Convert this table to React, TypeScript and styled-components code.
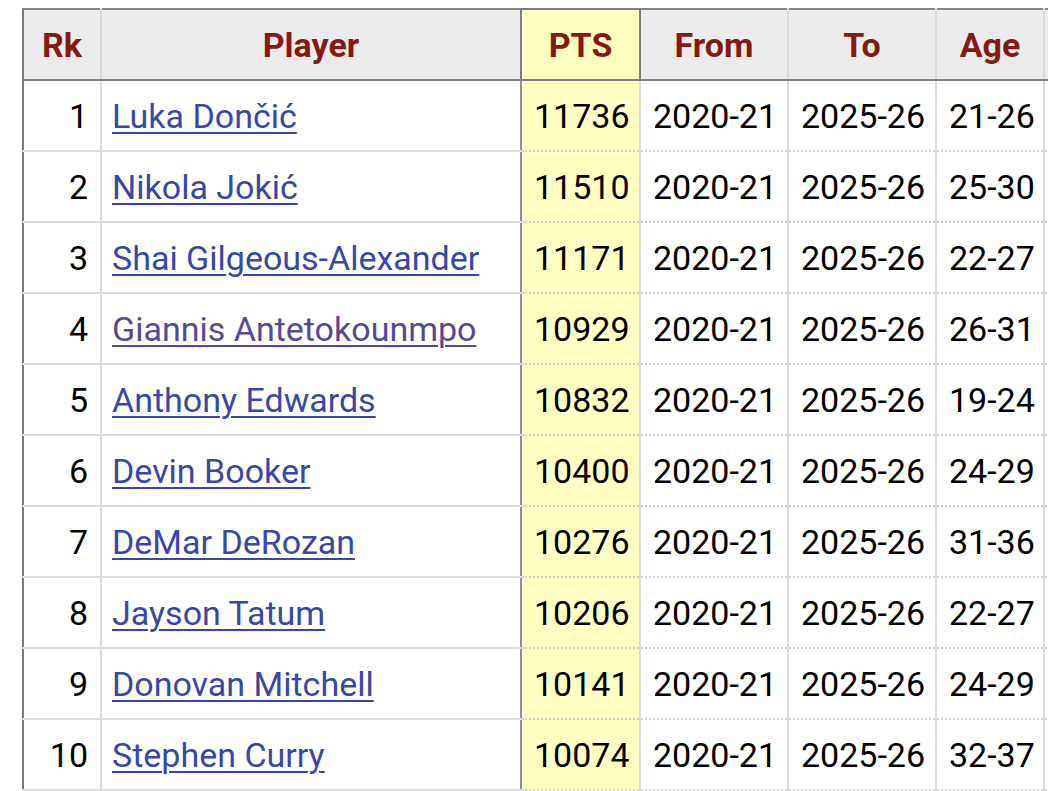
import React from "react";
import styled, { createGlobalStyle } from "styled-components";

const GlobalStyle = createGlobalStyle`
    html, body {
        margin: 0;
        padding: 0;
        background: #ffffff;
        overflow: hidden;
    }
    body {
        font-family: Roboto, "Liberation Sans", sans-serif;
    }
`
const Page = styled.div`
    width: 1048px;
    height: 791px;
    overflow: hidden;
    padding: 8px 0 0 22px;
    box-sizing: border-box;
`
const Table = styled.table`
    border-collapse: collapse;
    table-layout: fixed;
    width: 1120px;
    border-top: 2px solid #858585;
    border-left: 2px solid #7a7a7a;
`
const Th = styled.th<{ $hl?: boolean; $beforeHl?: boolean }>`
    height: 69px;
    padding: 0;
    background: ${p => (p.$hl ? "#ffffc2" : "#ececec")};
    color: #861a13;
    font-size: 34px;
    font-weight: 700;
    text-align: center;
    vertical-align: middle;
    border-bottom: 2px solid #7e7e7e;
    border-right: ${p => (p.$beforeHl ? "none" : "2px solid #d9d9d9")};
    ${p => p.$hl && "border: 2px solid #7e7e7e;"}
`
const Td = styled.td<{ $hl?: boolean; $left?: boolean; $dotted?: boolean; $beforeHl?: boolean }>`
    height: 69px;
    padding: ${p => (p.$left ? "0 10px" : "0 12px")};
    font-size: 34px;
    color: #000;
    text-align: ${p => (p.$left ? "left" : "right")};
    vertical-align: middle;
    white-space: nowrap;
    background: ${p => (p.$hl ? "#ffffc2" : "#ffffff")};
    border-bottom: 2px ${p => (p.$dotted ? "dotted #cfcfcf" : "solid #dcdcdc")};
    border-right: ${p => (p.$beforeHl ? "none" : "2px solid #dcdcdc")};
    ${p => p.$hl && "border-left: 2px solid #8f8f8f;"}
`
const PlayerLink = styled.a<{ $visited?: boolean }>`
    color: ${p => (p.$visited ? "#564a98" : "#3a47a6")};
    text-decoration: underline;
    text-decoration-thickness: 2px;
    text-underline-offset: 4px;
`

const rows = [
    { rk: 1, name: "Luka Dončić", pts: 11736, age: "21-26" },
    { rk: 2, name: "Nikola Jokić", pts: 11510, age: "25-30" },
    { rk: 3, name: "Shai Gilgeous-Alexander", pts: 11171, age: "22-27" },
    { rk: 4, name: "Giannis Antetokounmpo", pts: 10929, age: "26-31", visited: true },
    { rk: 5, name: "Anthony Edwards", pts: 10832, age: "19-24" },
    { rk: 6, name: "Devin Booker", pts: 10400, age: "24-29" },
    { rk: 7, name: "DeMar DeRozan", pts: 10276, age: "31-36" },
    { rk: 8, name: "Jayson Tatum", pts: 10206, age: "22-27" },
    { rk: 9, name: "Donovan Mitchell", pts: 10141, age: "24-29" },
    { rk: 10, name: "Stephen Curry", pts: 10074, age: "32-37" },
];

const App = () => {
    return (
        <Page>
            <GlobalStyle />
            <Table>
                <colgroup>
                    <col style={{ width: 78 }} />
                    <col style={{ width: 420 }} />
                    <col style={{ width: 119 }} />
                    <col style={{ width: 148 }} />
                    <col style={{ width: 148 }} />
                    <col style={{ width: 108 }} />
                    <col style={{ width: 99 }} />
                </colgroup>
                <thead>
                    <tr>
                        <Th>Rk</Th>
                        <Th $beforeHl>Player</Th>
                        <Th $hl>PTS</Th>
                        <Th>From</Th>
                        <Th>To</Th>
                        <Th>Age</Th>
                        <Th></Th>
                    </tr>
                </thead>
                <tbody>
                    {rows.map(r => (
                        <tr key={r.rk}>
                            <Td>{r.rk}</Td>
                            <Td $left $beforeHl>
                                <PlayerLink href="#" $visited={r.visited}>{r.name}</PlayerLink>
                            </Td>
                            <Td $hl $dotted>{r.pts}</Td>
                            <Td $dotted>2020-21</Td>
                            <Td $dotted>2025-26</Td>
                            <Td $dotted>{r.age}</Td>
                            <Td $dotted></Td>
                        </tr>
                    ))}
                </tbody>
            </Table>
        </Page>
    )
};
export default App;
